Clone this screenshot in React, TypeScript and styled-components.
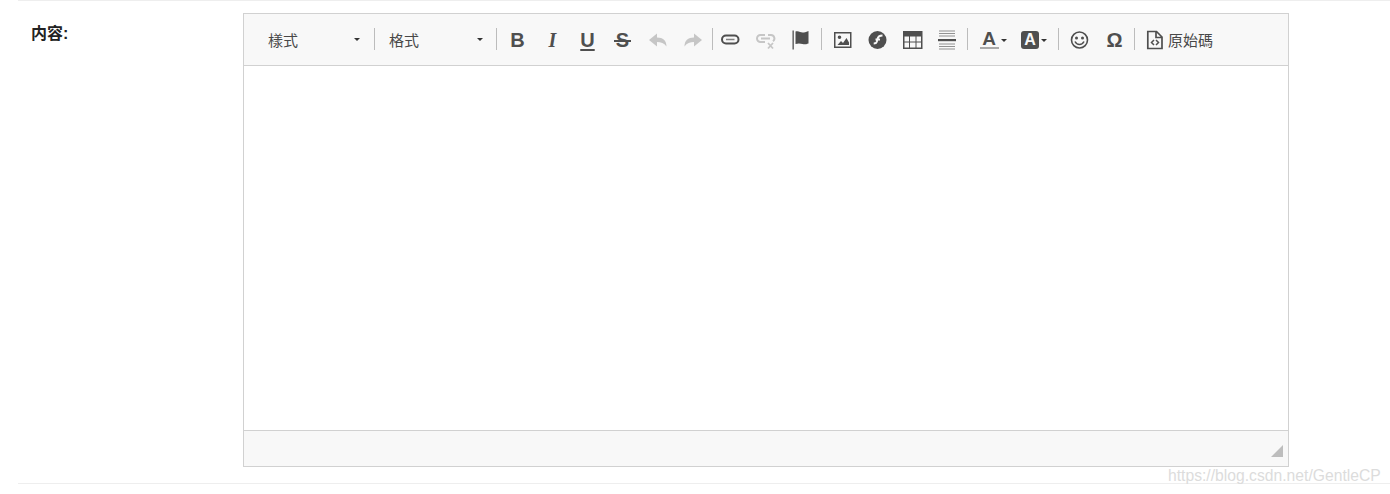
import React from 'react';
import styled, { createGlobalStyle } from 'styled-components';

const GlobalStyle = createGlobalStyle`
  html, body {
    margin: 0;
    background: #fff;
    overflow: hidden;
  }
  body {
    font-family: "Liberation Sans", "Noto Sans CJK TC", sans-serif;
  }
`;

const Page = styled.div`
  position: relative;
  width: 1390px;
  height: 494px;
  padding-left: 18px;
  box-sizing: border-box;
`;

const FormRow = styled.div`
  display: flex;
  align-items: flex-start;
  padding: 12px 0 16px;
  border-top: 1px solid #eee;
  border-bottom: 1px solid #eee;
`;

const FieldLabel = styled.label`
  width: 212px;
  padding: 11px 0 0 13px;
  font-size: 16px;
  line-height: 20px;
  font-weight: 700;
  color: #222;
`;

const Editor = styled.div`
  width: 1046px;
  height: 454px;
  box-sizing: border-box;
  border: 1px solid #d1d1d1;
  display: flex;
  flex-direction: column;
`;

const Toolbar = styled.div`
  height: 52px;
  flex: none;
  box-sizing: border-box;
  background: #f8f8f8;
  border-bottom: 1px solid #d1d1d1;
  display: flex;
  align-items: center;
  padding-bottom: 1px;
`;

const Combo = styled.div<{ $width: number; $pad: number; $end: number }>`
  width: ${p => p.$width}px;
  height: 22px;
  padding: 1px ${p => p.$end}px 0 ${p => p.$pad}px;
  box-sizing: border-box;
  display: flex;
  align-items: center;
  justify-content: space-between;
  font-size: 15px;
  color: #484848;
`;

const Caret = styled.span`
  width: 0;
  height: 0;
  flex: none;
  border-left: 3px solid transparent;
  border-right: 3px solid transparent;
  border-top: 3px solid #333;
`;

const Sep = styled.span`
  width: 1px;
  height: 22px;
  flex: none;
  background: #bcbcbc;
`;

const Group = styled.div<{ $left?: number; $right?: number }>`
  display: flex;
  align-items: center;
  padding-left: ${p => p.$left ?? 0}px;
  padding-right: ${p => p.$right ?? 0}px;
`;

const Tool = styled.span<{ $off?: boolean; $width?: number }>`
  width: ${p => p.$width ?? 35}px;
  height: 24px;
  padding-top: 2px;
  box-sizing: border-box;
  flex: none;
  display: flex;
  align-items: center;
  justify-content: center;
  color: ${p => (p.$off ? '#c6c6c6' : '#4f4f4f')};
  svg {
    flex: none;
  }
`;

const Letter = styled.span<{ $italic?: boolean; $under?: boolean; $strike?: boolean }>`
  position: relative;
  font-family: ${p => (p.$italic ? '"Liberation Serif", serif' : '"Liberation Sans", sans-serif')};
  font-size: 20px;
  line-height: 20px;
  font-weight: 700;
  font-style: ${p => (p.$italic ? 'italic' : 'normal')};
  text-decoration: ${p => (p.$under ? 'underline' : 'none')};
  text-decoration-thickness: 1.5px;
  text-underline-offset: 2px;
  &::after {
    content: '';
    display: ${p => (p.$strike ? 'block' : 'none')};
    position: absolute;
    left: -2px;
    right: -2px;
    top: 10px;
    height: 1.5px;
    background: #4f4f4f;
  }
`;

const ColorA = styled.span`
  display: flex;
  flex-direction: column;
  align-items: center;
  width: 19px;
  font-size: 19px;
  line-height: 15px;
  font-weight: 700;
  border-bottom: 2px solid #a9a9a9;
  padding-bottom: 1px;
`;

const FilledA = styled.span`
  width: 18px;
  height: 18px;
  border-radius: 3px;
  background: #4f4f4f;
  color: #f8f8f8;
  display: flex;
  align-items: center;
  justify-content: center;
  font-size: 16px;
  font-weight: 700;
`;

const DropTool = styled(Tool)`
  gap: 2px;
`;

const SourceTool = styled.div`
  display: flex;
  align-items: center;
  gap: 3px;
  padding-left: 10px;
  font-size: 15px;
  color: #484848;
`;

const Content = styled.div`
  flex: 1;
  background: #fff;
`;

const StatusBar = styled.div`
  height: 36px;
  flex: none;
  box-sizing: border-box;
  background: #f8f8f8;
  border-top: 1px solid #d1d1d1;
  display: flex;
  align-items: flex-end;
  justify-content: flex-end;
  padding: 0 5px 9px 0;
`;

const Watermark = styled.div`
  position: absolute;
  left: 1168px;
  top: 466px;
  font-size: 15.7px;
  line-height: 20px;
  color: #dcdcdc;
  white-space: nowrap;
`;

const Icon = ({ children }: { children: React.ReactNode }) => (
  <svg width={20} height={20} viewBox="0 0 20 20" fill="currentColor">
    {children}
  </svg>
);

const Undo = () => (
  <Icon>
    <path d="M9 3.500 1 10l8 6.500V12c4 0 7 1 9.500 4.500C18.500 10.500 15 7.500 9 7.500z" />
  </Icon>
);

const Redo = () => (
  <Icon>
    <path d="M11 3.500l8 6.500-8 6.500V12c-4 0-7 1-9.500 4.500C1.500 10.500 5 7.500 11 7.500z" />
  </Icon>
);

const LinkIcon = () => (
  <Icon>
    <rect x="1" y="5.500" width="16.500" height="8" rx="4" fill="none" stroke="currentColor" strokeWidth="2" />
    <path d="M5 9.500h8.500" fill="none" stroke="currentColor" strokeWidth="1.500" opacity=".7" />
  </Icon>
);

const UnlinkIcon = () => (
  <Icon>
    <path
      d="M9 5H4.500a3.500 3.500 0 0 0 0 7H9M12 5h3a3.500 3.500 0 0 1 2 6.300M5 8.500h9"
      fill="none"
      stroke="currentColor"
      strokeWidth="2"
    />
    <path d="M12 13l5 5.500M17 13l-5 5.500" fill="none" stroke="currentColor" strokeWidth="1.800" />
  </Icon>
);

const FlagIcon = () => (
  <Icon>
    <path d="M1.500 .5h1.300v19H1.500zM4.500 1.500c3-1 5 1 7 1s3-.5 6-1.500v12.500c-3 1-4 1-6 .5s-4-1-7 0z" />
  </Icon>
);

const ImageIcon = () => (
  <Icon>
    <path
      fillRule="evenodd"
      d="M1 2h17.500v16H1zM2.500 3.500v13h14.500v-13zM4.500 15l3.500-4 2 2 3.500-5 2.500 4.500V15zM6.500 5.500a1.800 1.800 0 1 1 0 3.600 1.800 1.800 0 0 1 0-3.600z"
    />
  </Icon>
);

const FlashIcon = () => (
  <Icon>
    <circle cx="9.500" cy="10" r="9" />
    <path
      d="M14.500 5.500c-3 0-4.500 1-5 3.500l-.8 3c-.3 1-1 1.500-3 1.500M7.500 9.500h4.500"
      fill="none"
      stroke="#f8f8f8"
      strokeWidth="2"
    />
  </Icon>
);

const TableIcon = () => (
  <Icon>
    <path
      fillRule="evenodd"
      d="M0 1h19.500v18H0zM1.500 6.500v5H6v-5zM7 6.500v5h5.500v-5zM13.500 6.500v5H18v-5zM1.500 12.500v5H6v-5zM7 12.500v5h5.500v-5zM13.500 12.500v5H18v-5z"
    />
  </Icon>
);

const RuleIcon = () => (
  <Icon>
    <path d="M0 9h18v2.200H0z" />
    <path d="M1 .5h16v1H1zM1 3h16v1H1zM1 5.500h16v1H1zM1 13.500h16v1H1zM1 16h16v1H1zM1 18.500h16v1H1z" opacity=".6" />
  </Icon>
);

const SmileyIcon = () => (
  <Icon>
    <circle cx="9.500" cy="10" r="8" fill="none" stroke="currentColor" strokeWidth="1.600" />
    <circle cx="6.500" cy="8" r="1.500" />
    <circle cx="12.500" cy="8" r="1.500" />
    <path d="M5 11.500c1 2 2.500 3 4.500 3s3.500-1 4.500-3" fill="none" stroke="currentColor" strokeWidth="1.600" />
  </Icon>
);

const SourceIcon = () => (
  <Icon>
    <path
      d="M2.800 1.500h8.700l5.500 5.500v11.500H2.800zM11 1.500V7.500h6"
      fill="none"
      stroke="currentColor"
      strokeWidth="1.700"
    />
    <path
      d="M9 10l-2.500 2.500L9 15M11 10l2.500 2.500L11 15"
      fill="none"
      stroke="currentColor"
      strokeWidth="1.500"
    />
  </Icon>
);

const ResizeGrip = () => (
  <svg width="12" height="12" viewBox="0 0 12 12">
    <path d="M12 0v12H0z" fill="#bdbdbd" />
  </svg>
);

export default function App() {
  return (
    <Page>
      <GlobalStyle />
      <FormRow>
        <FieldLabel>内容:</FieldLabel>
        <Editor>
          <Toolbar>
            <Combo $width={130} $pad={24} $end={14}>
              樣式
              <Caret />
            </Combo>
            <Sep />
            <Combo $width={121} $pad={14} $end={13}>
              格式
              <Caret />
            </Combo>
            <Sep />
            <Group $left={3} $right={2}>
              <Tool><Letter>B</Letter></Tool>
              <Tool><Letter $italic>I</Letter></Tool>
              <Tool><Letter $under>U</Letter></Tool>
              <Tool><Letter $strike>S</Letter></Tool>
              <Tool $off><Undo /></Tool>
              <Tool $off><Redo /></Tool>
            </Group>
            <Sep />
            <Group $right={3}>
              <Tool><LinkIcon /></Tool>
              <Tool $off><UnlinkIcon /></Tool>
              <Tool><FlagIcon /></Tool>
            </Group>
            <Sep />
            <Group $left={3} $right={2}>
              <Tool><ImageIcon /></Tool>
              <Tool><FlashIcon /></Tool>
              <Tool><TableIcon /></Tool>
              <Tool><RuleIcon /></Tool>
            </Group>
            <Sep />
            <Group $left={5} $right={3}>
              <DropTool $width={40}><ColorA>A</ColorA><Caret /></DropTool>
              <DropTool $width={42}><FilledA>A</FilledA><Caret /></DropTool>
            </Group>
            <Sep />
            <Group $left={3} $right={2}>
              <Tool><SmileyIcon /></Tool>
              <Tool><Letter>Ω</Letter></Tool>
            </Group>
            <Sep />
            <SourceTool>
              <Tool $width={20}><SourceIcon /></Tool>
              原始碼
            </SourceTool>
          </Toolbar>
          <Content />
          <StatusBar>
            <ResizeGrip />
          </StatusBar>
        </Editor>
      </FormRow>
      <Watermark>https://blog.csdn.net/GentleCP</Watermark>
    </Page>
  );
}
